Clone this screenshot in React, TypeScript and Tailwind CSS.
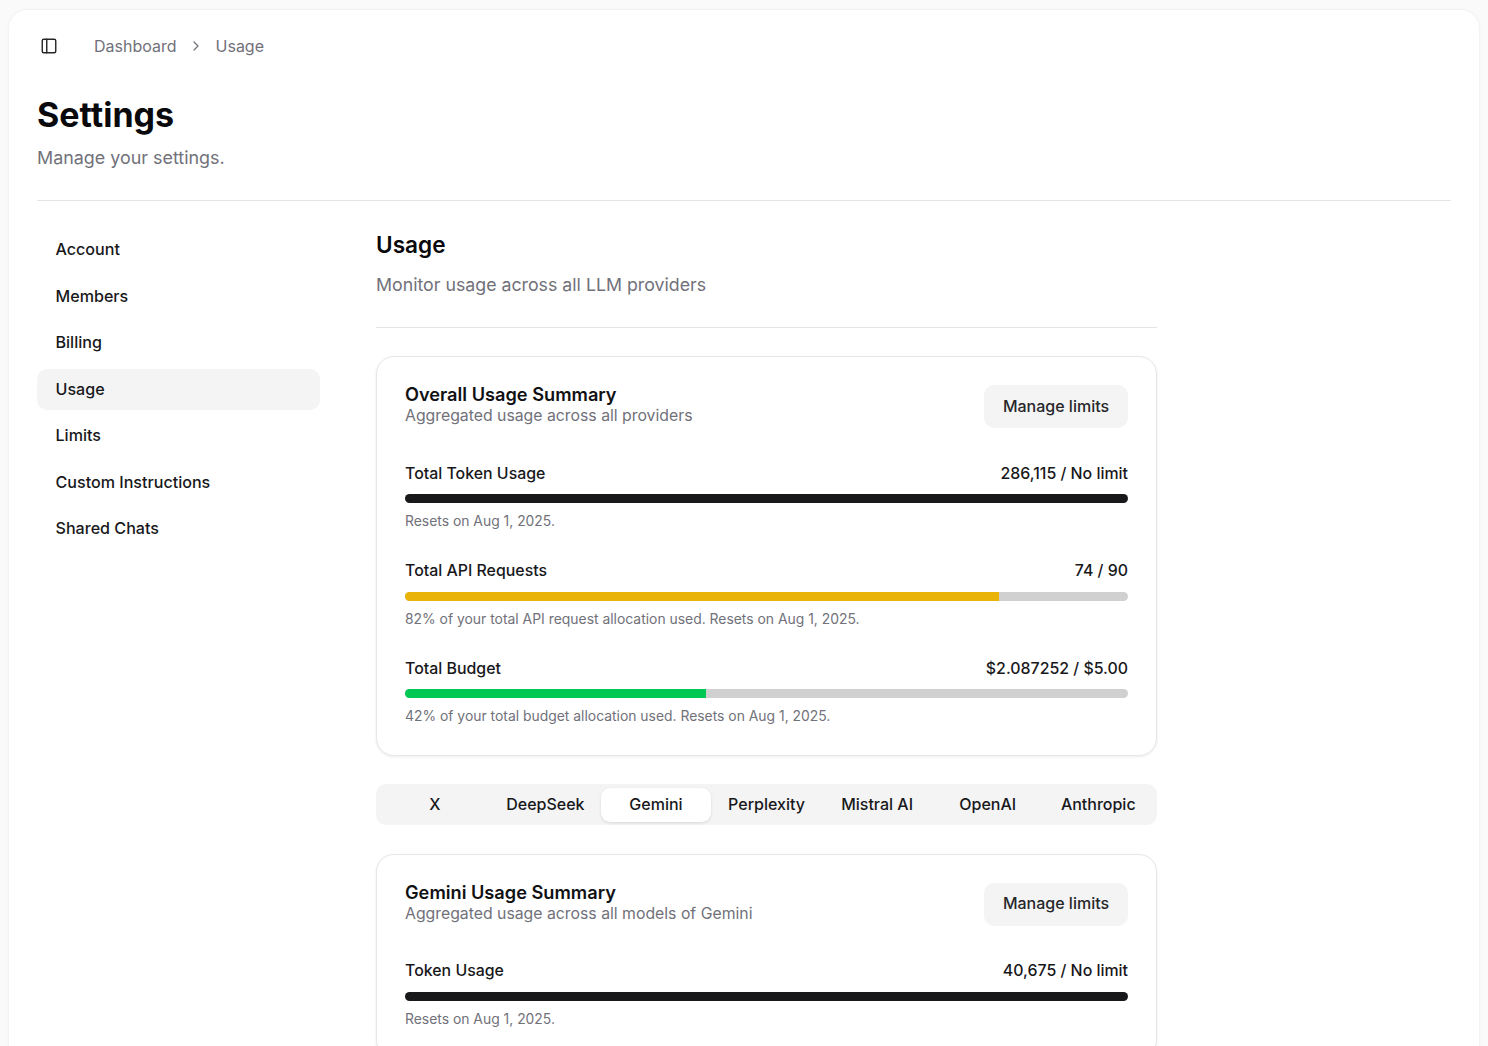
import { ChevronRight, PanelLeft } from 'lucide-react';

const navItems = ['Account', 'Members', 'Billing', 'Usage', 'Limits', 'Custom Instructions', 'Shared Chats'];
const tabs = ['X', 'DeepSeek', 'Gemini', 'Perplexity', 'Mistral AI', 'OpenAI', 'Anthropic'];

interface Meter {
  label: string;
  value: string;
  note: string;
  percent: number;
  color: string;
}

const overall: Meter[] = [
  { label: 'Total Token Usage', value: '286,115 / No limit', note: 'Resets on Aug 1, 2025.', percent: 100, color: '#18181b' },
  {
    label: 'Total API Requests',
    value: '74 / 90',
    note: '82% of your total API request allocation used. Resets on Aug 1, 2025.',
    percent: 82.2,
    color: '#eab308',
  },
  {
    label: 'Total Budget',
    value: '$2.087252 / $5.00',
    note: '42% of your total budget allocation used. Resets on Aug 1, 2025.',
    percent: 41.7,
    color: '#00c853',
  },
];

const gemini: Meter[] = [
  { label: 'Token Usage', value: '40,675 / No limit', note: 'Resets on Aug 1, 2025.', percent: 100, color: '#18181b' },
];

function MeterRow({ meter }: { meter: Meter }) {
  return (
    <div className="h-[97.5px] shrink-0">
      <div className="flex h-[23px] items-center justify-between text-[15.9px] font-medium leading-none text-[#18181b]">
        <span>{meter.label}</span>
        <span>{meter.value}</span>
      </div>
      <div className="mt-[9px] h-[9px] overflow-hidden rounded-full bg-[#d0d0d0]">
        <div className="h-full" style={{ width: `${meter.percent}%`, backgroundColor: meter.color }} />
      </div>
      <p className="mt-[9px] text-[13.9px] leading-[18px] text-[#71717a]">{meter.note}</p>
    </div>
  );
}

function SummaryCard({ title, subtitle, meters }: { title: string; subtitle: string; meters: Meter[] }) {
  return (
    <section className="rounded-[18px] border border-[#e7e7e9] bg-white px-[28px] pt-[28px] shadow-[0_1px_3px_rgba(0,0,0,0.08)]">
      <div className="flex h-[43px] items-start justify-between">
        <div>
          <h3 className="-mt-[1px] text-[18.2px] font-semibold leading-[20px] text-[#111113]">{title}</h3>
          <p className="text-[15.8px] leading-[24px] text-[#71717a]">{subtitle}</p>
        </div>
        <button
          type="button"
          className="flex h-[43px] w-[144px] items-center justify-center rounded-[10px] bg-[#f4f4f5] pb-[2px] text-[16px] font-medium text-[#27272a]"
        >
          Manage limits
        </button>
      </div>
      <div className="mt-[34px] flex flex-col">
        {meters.map((meter) => (
          <MeterRow key={meter.label} meter={meter} />
        ))}
      </div>
    </section>
  );
}

export default function App() {
  return (
    <div className="h-[1046px] overflow-hidden bg-[#fafafa] pl-[9px] pr-[9px] pt-[9.5px] font-['Inter',sans-serif]">
      <div className="h-[1100px] rounded-[18px] bg-white px-[28px] shadow-[0_0_3px_rgba(0,0,0,0.08)]">
        <header className="flex h-[73px] items-center">
          <PanelLeft className="ml-[3px] size-[18px] text-[#27272a]" strokeWidth={1.9} />
          <nav className="ml-[36px] flex items-center text-[16px] text-[#71717a]">
            <span>Dashboard</span>
            <ChevronRight className="mx-[11.5px] size-[16px]" strokeWidth={1.8} />
            <span>Usage</span>
          </nav>
        </header>

        <div className="h-[118px] border-b border-[#e4e4e7]">
          <h1 className="mt-[10px] inline-block text-[34px] font-bold leading-[44px] text-[#09090b]">Settings</h1>
          <p className="mt-[9.5px] text-[17.9px] leading-[24px] text-[#71717a]">Manage your settings.</p>
        </div>

        <div className="mt-[27.5px] flex">
          <aside className="flex w-[282.5px] shrink-0 flex-col gap-[5.5px] pt-[1px]">
            {navItems.map((item) => (
              <div
                key={item}
                className={`flex h-[41px] items-center rounded-[10px] px-[18.5px] text-[16.1px] font-medium text-[#18181b] ${
                  item === 'Usage' ? 'bg-[#f4f4f5]' : ''
                }`}
              >
                {item}
              </div>
            ))}
          </aside>

          <main className="ml-[56.5px] w-[781px] shrink-0">
            <div className="h-[100px] border-b border-[#e4e4e7]">
              <h2 className="text-[22.6px] font-semibold leading-[34px] text-[#09090b]">Usage</h2>
              <p className="mt-[11px] text-[17.75px] leading-[24px] text-[#71717a]">Monitor usage across all LLM providers</p>
            </div>

            <div className="mt-[28px]">
              <SummaryCard title="Overall Usage Summary" subtitle="Aggregated usage across all providers" meters={overall} />
            </div>

            <div className="mt-[28.5px] flex h-[41px] rounded-[10px] bg-[#f4f4f5] p-[3.5px]">
              {tabs.map((tab) => (
                <div
                  key={tab}
                  className={`flex flex-1 items-center justify-center rounded-[9px] pb-[2px] text-[16px] font-medium text-[#18181b] ${
                    tab === 'Gemini' ? 'bg-white shadow-[0_1px_3px_rgba(0,0,0,0.12)]' : ''
                  }`}
                >
                  {tab}
                </div>
              ))}
            </div>

            <div className="mt-[28.5px]">
              <SummaryCard title="Gemini Usage Summary" subtitle="Aggregated usage across all models of Gemini" meters={gemini} />
            </div>
          </main>
        </div>
      </div>
    </div>
  );
}
